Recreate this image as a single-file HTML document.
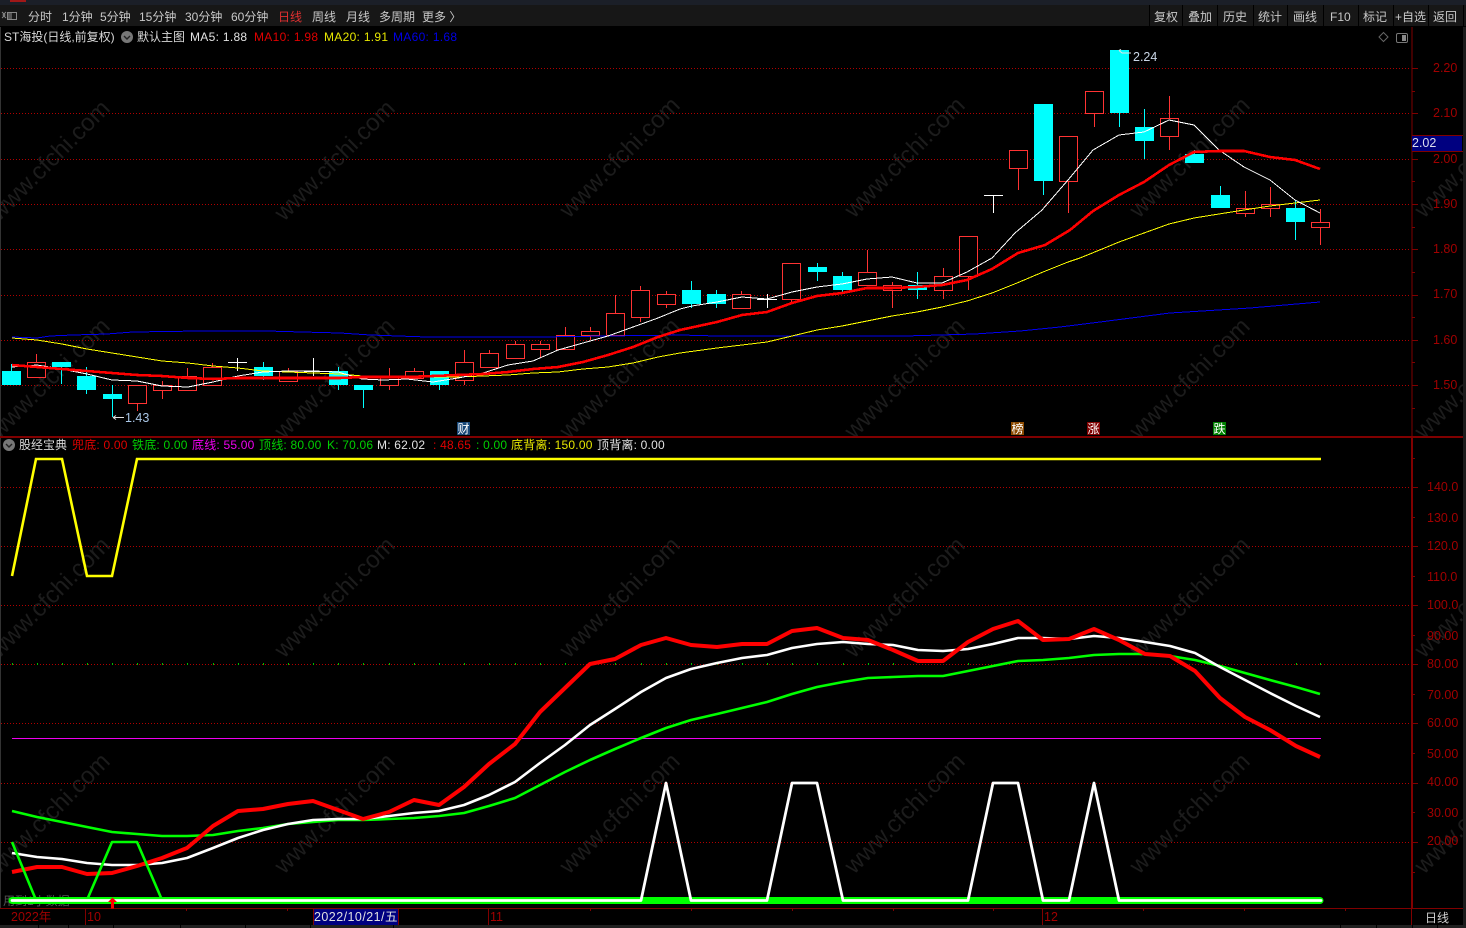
<!DOCTYPE html>
<html lang="zh">
<head>
<meta charset="utf-8">
<title>ST海投</title>
<style>
html,body{margin:0;padding:0;background:#000;width:1466px;height:928px;overflow:hidden}
svg{display:block;position:absolute;left:0;top:0}
text{font-family:"Liberation Sans","Noto Sans CJK SC",sans-serif;font-size:12px}
.wm text{font-size:24px;fill:#1c1c1c}
.cr{shape-rendering:crispEdges}
.tb text{fill:#c8c8c8;font-size:12px}
.ax text{fill:#a00000;font-size:12.5px}
.ls text{letter-spacing:.3px}
</style>
</head>
<body>
<svg width="1466" height="928" viewBox="0 0 1466 928" xmlns="http://www.w3.org/2000/svg">
<rect width="1466" height="928" fill="#000"/>

<!-- watermark -->
<g class="wm" transform="translate(-5,2)">
<text transform="translate(4,220) rotate(-45)">www.cfchi.com</text>
<text transform="translate(289,220) rotate(-45)">www.cfchi.com</text>
<text transform="translate(574,217) rotate(-45)">www.cfchi.com</text>
<text transform="translate(859,217) rotate(-45)">www.cfchi.com</text>
<text transform="translate(1144,217) rotate(-45)">www.cfchi.com</text>
<text transform="translate(1429,217) rotate(-45)">www.cfchi.com</text>
<text transform="translate(4,438) rotate(-45)">www.cfchi.com</text>
<text transform="translate(289,438) rotate(-45)">www.cfchi.com</text>
<text transform="translate(574,438) rotate(-45)">www.cfchi.com</text>
<text transform="translate(859,438) rotate(-45)">www.cfchi.com</text>
<text transform="translate(1144,438) rotate(-45)">www.cfchi.com</text>
<text transform="translate(1429,438) rotate(-45)">www.cfchi.com</text>
<text transform="translate(4,657) rotate(-45)">www.cfchi.com</text>
<text transform="translate(289,657) rotate(-45)">www.cfchi.com</text>
<text transform="translate(574,657) rotate(-45)">www.cfchi.com</text>
<text transform="translate(859,657) rotate(-45)">www.cfchi.com</text>
<text transform="translate(1144,657) rotate(-45)">www.cfchi.com</text>
<text transform="translate(1429,657) rotate(-45)">www.cfchi.com</text>
<text transform="translate(4,873) rotate(-45)">www.cfchi.com</text>
<text transform="translate(289,873) rotate(-45)">www.cfchi.com</text>
<text transform="translate(574,873) rotate(-45)">www.cfchi.com</text>
<text transform="translate(859,873) rotate(-45)">www.cfchi.com</text>
<text transform="translate(1144,873) rotate(-45)">www.cfchi.com</text>
<text transform="translate(1429,873) rotate(-45)">www.cfchi.com</text>
</g>

<!-- top strip + toolbar -->
<rect x="0" y="0" width="1466" height="5" fill="#1b1f28"/>
<rect x="10" y="0" width="16" height="2" fill="#a01818"/>
<rect x="0" y="5" width="1466" height="21" fill="#171717"/>
<rect x="0" y="26" width="1466" height="1" fill="#000"/>
<path class="cr" d="M1149.5 5V26M1182.5 5V26M1217.5 5V26M1253.5 5V26M1287.5 5V26M1323.5 5V26M1358.5 5V26M1393.5 5V26M1428.5 5V26M1463.5 5V26" stroke="#000" stroke-width="1"/>
<path d="M2 12l3 3-3 3M6 12l-3 3 3 3" stroke="#888" fill="none"/>
<rect x="7.5" y="12.5" width="9" height="7" fill="none" stroke="#888"/>
<rect x="8" y="13" width="4" height="6" fill="#555"/>
<g class="tb">
<text x="28" y="21">分时</text>
<text x="62" y="21">1分钟</text>
<text x="100" y="21">5分钟</text>
<text x="139" y="21">15分钟</text>
<text x="185" y="21">30分钟</text>
<text x="231" y="21">60分钟</text>
<text x="278" y="21" style="fill:#e03030">日线</text>
<text x="312" y="21">周线</text>
<text x="346" y="21">月线</text>
<text x="379" y="21">多周期</text>
<text x="422" y="21">更多 〉</text>
<text x="1154" y="21">复权</text>
<text x="1188" y="21">叠加</text>
<text x="1223" y="21">历史</text>
<text x="1258" y="21">统计</text>
<text x="1293" y="21">画线</text>
<text x="1330" y="21">F10</text>
<text x="1363" y="21">标记</text>
<text x="1395" y="21">+自选</text>
<text x="1433" y="21">返回</text>
</g>

<!-- price grid -->
<g stroke="#b00000" stroke-width="1" stroke-dasharray="1 2" fill="none">
<path d="M1 68.5H1411M1 113.5H1411M1 159.5H1411M1 204.5H1411M1 249.5H1411M1 295.5H1411M1 340.5H1411M1 385.5H1411"/>
<path d="M1 487.5H1411M1 546.5H1411M1 605.5H1411M1 664.5H1411M1 723.5H1411M1 783.5H1411M1 842.5H1411"/>
</g>

<!-- frame -->
<path class="cr" d="M0.5 27V908" stroke="#333" stroke-width="1"/>
<path class="cr" d="M1412 27V437" stroke="#800000" stroke-width="1"/>
<path class="cr" d="M0 437H1463" stroke="#800000" stroke-width="2"/>
<path class="cr" d="M1412 437V908" stroke="#800000" stroke-width="2"/>
<path class="cr" d="M0 908.5H1463" stroke="#800000" stroke-width="1"/>
<rect x="1463" y="27" width="3" height="898" fill="#1c1c1c"/>

<!-- axis ticks -->
<path class="cr" stroke="#800000" d="M1412 68.5H1418M1412 91.5H1415M1412 113.5H1418M1412 136.5H1415M1412 159.5H1418M1412 181.5H1415M1412 204.5H1418M1412 227.5H1415M1412 249.5H1418M1412 272.5H1415M1412 295.5H1418M1412 317.5H1415M1412 340.5H1418M1412 362.5H1415M1412 385.5H1418M1412 408.5H1415"/>
<path class="cr" stroke="#800000" d="M1412 458.5H1415M1412 487.5H1418M1412 517.5H1415M1412 546.5H1418M1412 576.5H1415M1412 605.5H1418M1412 635.5H1415M1412 664.5H1418M1412 694.5H1415M1412 723.5H1418M1412 753.5H1415M1412 783.5H1418M1412 812.5H1415M1412 842.5H1418M1412 872.5H1415"/>

<g class="ax">
<text x="1433" y="72">2.20</text>
<text x="1433" y="117">2.10</text>
<text x="1433" y="163">2.00</text>
<text x="1433" y="208">1.90</text>
<text x="1433" y="253">1.80</text>
<text x="1433" y="298">1.70</text>
<text x="1433" y="344">1.60</text>
<text x="1433" y="389">1.50</text>
<text x="1427" y="491">140.0</text>
<text x="1427" y="522">130.0</text>
<text x="1427" y="550">120.0</text>
<text x="1427" y="581">110.0</text>
<text x="1427" y="609">100.0</text>
<text x="1427" y="640">90.00</text>
<text x="1427" y="668">80.00</text>
<text x="1427" y="699">70.00</text>
<text x="1427" y="727">60.00</text>
<text x="1427" y="758">50.00</text>
<text x="1427" y="786">40.00</text>
<text x="1427" y="817">30.00</text>
<text x="1427" y="845">20.00</text>
</g>

<!-- current price tag -->
<rect x="1412" y="135" width="50" height="17" fill="#000080"/>
<path class="cr" d="M1412 135.5H1463M1412 151.5H1463" stroke="#800000"/>
<text x="1412" y="147" fill="#dde" style="font-size:12.5px">2.02</text>

<!-- title lines -->
<text x="4" y="41" fill="#d8d8d8">ST海投(日线,前复权)</text>
<circle cx="127" cy="37" r="6" fill="#777"/>
<path d="M124 36l3 3 3-3" stroke="#222" stroke-width="1.4" fill="none"/>
<text x="137" y="41" fill="#d8d8d8">默认主图</text>
<g class="ls">
<text x="190" y="41" fill="#e2e2e2">MA5: 1.88</text>
<text x="254" y="41" fill="#e00000">MA10: 1.98</text>
<text x="324" y="41" fill="#e6e600">MA20: 1.91</text>
<text x="393" y="41" fill="#0000e6">MA60: 1.68</text>
</g>
<path d="M1383.5 32.5l4.5 4.5-4.5 4.5-4.5-4.5z" fill="none" stroke="#666"/>
<rect x="1396.5" y="33.5" width="11" height="9" rx="1.5" fill="none" stroke="#777"/>
<rect x="1402" y="35" width="4" height="6" fill="#888"/>

<circle cx="9" cy="445" r="6" fill="#777"/>
<path d="M6 444l3 3 3-3" stroke="#222" stroke-width="1.4" fill="none"/>
<text x="19" y="449" fill="#d8d8d8">股经宝典</text>
<g style="letter-spacing:.2px">
<text x="72" y="449" fill="#e00000">兜底: 0.00</text>
<text x="132" y="449" fill="#00d000">铁底: 0.00</text>
<text x="192" y="449" fill="#f000f0">底线: 55.00</text>
<text x="259" y="449" fill="#00d000">顶线: 80.00</text>
<text x="327" y="449" fill="#00d000">K: 70.06</text>
<text x="377" y="449" fill="#e2e2e2">M: 62.02</text>
<text x="433" y="449" fill="#e00000">: 48.65</text>
<text x="476" y="449" fill="#00d000">: 0.00</text>
<text x="511" y="449" fill="#e6e600">底背离: 150.00</text>
<text x="597" y="449" fill="#e2e2e2">顶背离: 0.00</text>
</g>

<!-- hollow red candles -->
<g class="cr" fill="#000" stroke="#ff3333" stroke-width="1">
<rect x="27.5" y="362.5" width="18" height="15"/>
<rect x="128.5" y="385.5" width="18" height="18"/>
<rect x="153.5" y="385.5" width="18" height="5"/>
<rect x="178.5" y="376.5" width="18" height="14"/>
<rect x="203.5" y="367.5" width="18" height="18"/>
<rect x="279.5" y="371.5" width="18" height="10"/>
<rect x="380.5" y="376.5" width="18" height="9"/>
<rect x="405.5" y="371.5" width="18" height="7"/>
<rect x="455.5" y="362.5" width="18" height="18"/>
<rect x="480.5" y="353.5" width="18" height="14"/>
<rect x="506.5" y="344.5" width="18" height="14"/>
<rect x="531.5" y="344.5" width="18" height="5"/>
<rect x="556.5" y="335.5" width="18" height="14"/>
<rect x="581.5" y="331.5" width="18" height="4"/>
<rect x="606.5" y="313.5" width="18" height="22"/>
<rect x="631.5" y="290.5" width="18" height="27"/>
<rect x="657.5" y="294.5" width="18" height="10"/>
<rect x="732.5" y="294.5" width="18" height="14"/>
<rect x="782.5" y="263.5" width="18" height="36"/>
<rect x="858.5" y="272.5" width="18" height="13"/>
<rect x="883.5" y="285.5" width="18" height="5"/>
<rect x="934.5" y="276.5" width="18" height="14"/>
<rect x="959.5" y="236.5" width="18" height="40"/>
<rect x="1009.5" y="150.5" width="18" height="18"/>
<rect x="1059.5" y="136.5" width="18" height="45"/>
<rect x="1085.5" y="91.5" width="18" height="22"/>
<rect x="1160.5" y="118.5" width="18" height="18"/>
<rect x="1236.5" y="208.5" width="18" height="5"/>
<rect x="1261.5" y="204.5" width="18" height="4"/>
<rect x="1311.5" y="222.5" width="18" height="5"/>
</g>
<path class="cr" fill="none" stroke="#ff3333" d="M36.5 354V362M137.5 404V411M162.5 381V385M162.5 391V399M187.5 368V376M212.5 363V367M288.5 368V371M389.5 368V376M389.5 386V390M414.5 368V371M414.5 379V380M464.5 350V362M464.5 381V385M489.5 350V353M515.5 341V344M540.5 341V344M540.5 350V358M565.5 327V335M590.5 327V331M590.5 336V340M615.5 295V313M640.5 286V290M640.5 318V322M666.5 291V294M666.5 305V308M741.5 291V294M791.5 300V303M867.5 250V272M892.5 282V285M892.5 291V308M943.5 268V276M943.5 291V299M968.5 277V290M1018.5 169V190M1068.5 182V213M1094.5 114V127M1169.5 96V118M1169.5 137V150M1245.5 191V208M1245.5 214V217M1270.5 187V204M1270.5 209V217M1320.5 209V222M1320.5 228V245"/>

<!-- cyan candles -->
<path class="cr" fill="none" stroke="#00ffff" d="M11.5 364V371M61.5 367V384M86.5 367V394M112.5 385V417M263.5 362V380M338.5 367V390M363.5 390V408M439.5 385V390M691.5 281V308M716.5 290V308M817.5 263V281M842.5 272V294M917.5 272V299M1043.5 181V195M1119.5 113V127M1144.5 109V159M1194.5 150V154M1220.5 186V195M1295.5 200V240"/>
<path class="cr" fill="#00ffff" d="M2 371h19v14H2zM52 362h19v5H52zM77 376h19v14H77zM103 394h19v5H103zM254 367h19v9H254zM329 371h19v14H329zM354 385h19v5H354zM430 371h19v14H430zM682 290h19v14H682zM707 294h19v10H707zM808 267h19v5H808zM833 276h19v14H833zM908 285h19v5H908zM1034 104h19v77H1034zM1110 50h19v63H1110zM1135 127h19v14H1135zM1185 154h19v9H1185zM1211 195h19v13H1211zM1286 208h19v14H1286z"/>

<!-- white doji candles -->
<path class="cr" fill="none" stroke="#ffffff" d="M228 362.5H247M237.5 358V371M304 371.5H323M313.5 358V376M757 299.5H777M767.5 294V308M984 195.5H1003M993.5 195V213"/>

<!-- MA60 -->
<polyline class="cr" fill="none" stroke="#0000f0" stroke-width="1" points="12,337 37,338 50,336 73,335 107,334 133,332 200,331 267,331 302,332 340,333 370,335 427,337 540,337 607,336 680,335 717,336 800,336 905,336 975,334 1020,331 1060,327 1100,322 1170,313 1250,308 1320,302"/>
<!-- MA20 -->
<polyline class="cr" fill="none" stroke="#ffff00" stroke-width="1" points="12,338 37,340 62,344 87,349 112,353 137,357 162,361 188,363 213,366 238,368 263,371 288,372 313,373 340,374 362,376 387,376 433,377 458,377 483,376 508,375 533,373 558,372 583,369 608,367 633,363 658,357 680,353 717,348 742,345 767,342 792,336 817,330 842,326 867,321 892,316 917,312 942,307 967,301 992,293 1017,283 1043,272 1068,262 1080,258 1107,247 1119,242 1144,233 1169,224 1194,218 1219,214 1244,210 1270,206 1295,203 1320,200"/>
<!-- MA5 -->
<polyline class="cr" fill="none" stroke="#ffffff" stroke-width="1" points="12,367 37,365 62,369 87,374 112,380 137,381 162,386 188,387 213,382 238,376 263,372 288,371 313,371 338,372 362,379 383,380 407,379 433,382 458,378 483,373 508,365 533,361 558,350 583,343 608,336 633,327 658,318 680,309 692,306 717,302 742,297 767,299 792,292 817,287 842,284 867,279 892,277 917,283 942,283 967,272 992,258 1015,233 1042,210 1068,180 1093,150 1119,135 1144,132 1169,120 1194,125 1219,150 1244,167 1270,180 1295,200 1320,213"/>
<!-- MA10 -->
<polyline class="cr" fill="none" stroke="#ff0000" stroke-width="2.6" stroke-linejoin="round" points="12,365 37,367 62,369 87,371 112,373 137,375 162,376 188,378 213,379 238,378 263,378 288,378 313,378 340,378 362,377 387,377 407,377 433,376 458,375 483,374 508,372 533,369 558,367 583,362 608,355 633,347 658,337 680,330 717,322 742,315 767,312 792,303 817,296 842,293 867,288 892,288 917,287 942,285 967,280 992,269 1018,253 1045,245 1070,230 1093,211 1119,195 1144,182 1169,165 1194,152 1219,151 1244,151 1270,157 1295,160 1320,169" />

<!-- extremes -->
<path fill="none" stroke="#e0e0e0" d="M1119 50.5l3 2.5h9M1119 50.5l2-1"/>
<text x="1133" y="61" fill="#c9d6e6" style="font-size:12.5px">2.24</text>
<path fill="none" stroke="#e0e0e0" d="M113 417.5H124M113 417.5l3-2M113 417.5l3 2"/>
<text x="125" y="422" fill="#a9c6e6" style="font-size:12.5px">1.43</text>

<!-- signal badges -->
<rect x="457" y="422" width="13" height="13" fill="#184878"/>
<text x="457.5" y="433" fill="#fff">财</text>
<rect x="1011" y="422" width="13" height="13" fill="#8c4a00"/>
<text x="1011.5" y="433" fill="#fff">榜</text>
<rect x="1087" y="422" width="13" height="13" fill="#800000"/>
<text x="1087.5" y="433" fill="#fff">涨</text>
<rect x="1213" y="422" width="13" height="13" fill="#008000"/>
<text x="1213.5" y="433" fill="#fff">跌</text>

<!-- lower panel -->
<polyline fill="none" stroke="#ffff00" stroke-width="2.6" points="12,576 36,459 62,459 87,576 112,576 137,459 1321,459"/>
<path class="cr" stroke="#00c000" d="M12.5 663V665M37.5 663V665M62.5 663V665M87.5 663V665M112.5 663V665M137.5 663V665M162.5 663V665M187.5 663V665M213.5 663V665M238.5 663V665M263.5 663V665M288.5 663V665M313.5 663V665M338.5 663V665M363.5 663V665M389.5 663V665M414.5 663V665M439.5 663V665M464.5 663V665M489.5 663V665M515.5 663V665M540.5 663V665M565.5 663V665M615.5 663V665M641.5 663V665M666.5 663V665M691.5 663V665M717.5 663V665M742.5 663V665M767.5 663V665M792.5 663V665M817.5 663V665M843.5 663V665M868.5 663V665M893.5 663V665M968.5 663V665M1296.5 663V665M1320.5 663V665"/>
<path class="cr" stroke="#ee00ee" d="M12 738.5H1321"/>

<text x="3" y="905" fill="#555">用到1小数据</text>

<polyline fill="none" stroke="#00ff00" stroke-width="2.6" stroke-linejoin="round" points="12,811 37,817 62,822 87,827 112,832 137,834 162,836 187,836 213,835 238,831 263,828 288,824 313,822 338,820 363,820 389,819 414,818 439,816 464,813 489,806 515,798 540,785 565,772 590,760 615,749 641,738 666,728 691,720 717,714 742,708 767,702 792,694 817,687 843,682 868,678 893,677 918,676 943,676 968,671 993,666 1018,661 1043,660 1069,658 1094,655 1119,654 1145,654 1170,656 1195,660 1220,666 1245,673 1270,680 1296,687 1320,694"/>
<polyline fill="none" stroke="#ffffff" stroke-width="2.6" stroke-linejoin="round" points="12,853 37,857 62,859 87,863 112,865 137,865 162,863 187,858 213,848 238,838 263,830 288,824 313,820 338,819 363,819 389,816 414,813 439,811 464,805 489,795 515,782 540,763 565,745 590,725 615,709 641,692 666,678 691,669 717,663 742,658 767,655 792,648 817,644 843,642 868,644 893,645 918,650 943,651 968,649 993,644 1018,638 1043,638 1069,639 1094,636 1119,638 1145,642 1170,646 1195,653 1220,667 1245,680 1270,693 1296,706 1320,717"/>
<polyline fill="none" stroke="#ff0000" stroke-width="4" stroke-linejoin="round" points="12,872 37,867 62,867 87,874 112,873 137,866 162,858 187,848 213,826 238,811 263,809 288,804 313,801 338,810 363,819 389,812 414,800 439,805 464,787 489,764 515,744 540,712 565,688 590,664 615,659 641,645 666,638 691,645 717,647 742,644 767,644 792,631 817,628 843,638 868,640 893,650 918,661 943,661 968,642 993,629 1018,621 1043,640 1069,639 1094,629 1119,640 1145,654 1170,656 1195,671 1220,698 1245,717 1270,730 1296,746 1320,757"/>

<polyline fill="none" stroke="#00ff00" stroke-width="2.6" stroke-linejoin="round" points="12,842 36,900 87,900 112,842 137,842 162,900"/>
<path d="M12 900.5H1320" stroke="#00ff00" stroke-width="7" stroke-linecap="round" fill="none"/>
<polyline fill="none" stroke="#ffffff" stroke-width="2.8" stroke-linejoin="round" stroke-linecap="round" points="12,900.5 641,900.5 666,783 691,900.5 767,900.5 792,783 817,783 843,900.5 968,900.5 993,783 1018,783 1043,900.5 1069,900.5 1094,783 1119,900.5 1321,900.5"/>

<!-- red arrow -->
<path d="M112.5 897.5l4.5 4.5h-3v6.5h-3V902h-3z" fill="#ff0000"/>

<!-- time axis -->
<rect x="313" y="909" width="85" height="16" fill="#000080"/>
<path class="cr" stroke="#800000" d="M85.5 909V925M313.5 909V925M398.5 909V925M488.5 909V925M1042.5 909V925M1411.5 909V925M186.5 909V911M287.5 909V911M590.5 909V911M691.5 909V911M792.5 909V911M893.5 909V911M993.5 909V911M1143.5 909V911M1244.5 909V911M1345.5 909V911"/>
<text x="11" y="921" fill="#a00000" style="font-size:12.5px">2022年</text>
<text x="87" y="921" fill="#a00000" style="font-size:12.5px">10</text>
<text x="314" y="921" fill="#e0e0e0" style="font-size:12.5px;letter-spacing:.45px">2022/10/21/五</text>
<text x="490" y="921" fill="#a00000" style="font-size:12.5px">11</text>
<text x="1044" y="921" fill="#a00000" style="font-size:12.5px">12</text>
<text x="1425" y="922" fill="#cfcfcf">日线</text>

<!-- bottom strip -->
<rect x="0" y="925" width="1466" height="3" fill="#202020"/>
<path class="cr" stroke="#000" d="M38.5 925V928M68.5 925V928M113.5 925V928M180.5 925V928M245.5 925V928M310.5 925V928M393.5 925V928M1340.5 925V928M1376.5 925V928M1412.5 925V928M1437.5 925V928"/>
</svg>
</body>
</html>
